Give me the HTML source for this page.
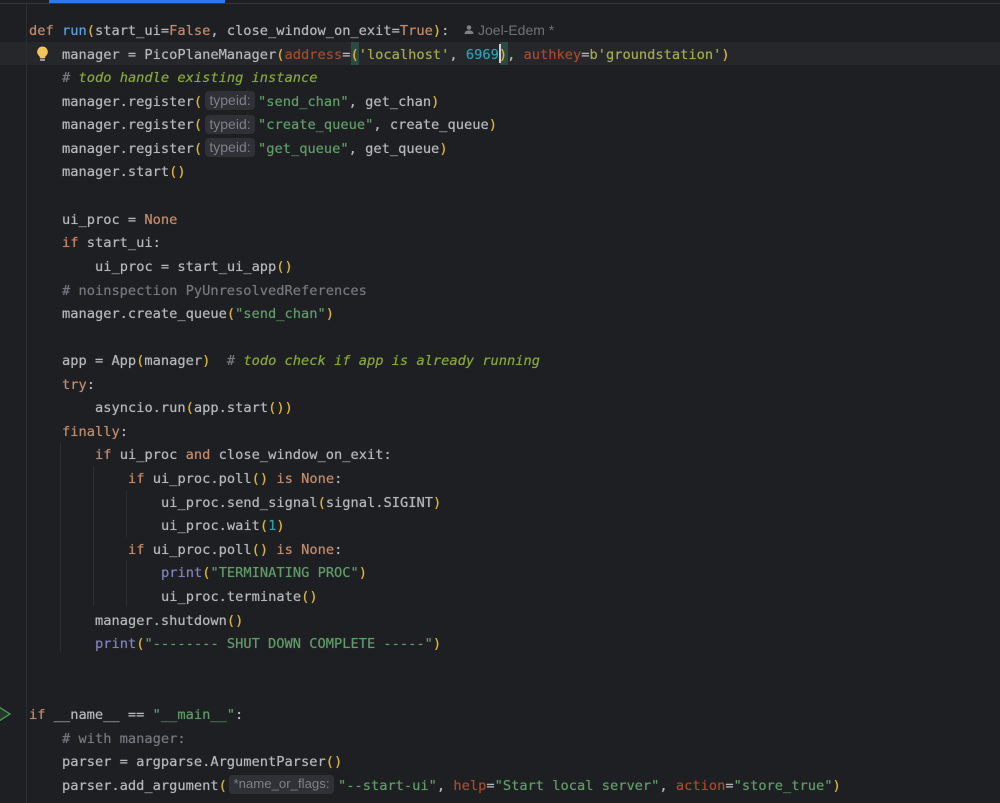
<!DOCTYPE html>
<html><head><meta charset="utf-8">
<style>
html,body{margin:0;padding:0;background:#1e1f22;}
#p{position:relative;width:1000px;height:803px;overflow:hidden;background:#1e1f22;}
.l{position:absolute;white-space:pre;font:13.7px/24px "DejaVu Sans Mono","Liberation Mono",monospace;color:#b4b6bc;height:24px;margin-top:1px;filter:blur(.35px);text-shadow:0 0 .6px currentColor;}
.k{color:#c08a6c}.f{color:#5a9fdf}.y{color:#dcb43c}.s{color:#5f9a68}.n{color:#2b9fae}.c{color:#74777e}.t{color:#86a53c;font-style:italic}.h{color:#a34a2c}.p{color:#8080bb}.g{color:#a3a84f}
.i{position:absolute;background:#2f3136;border-radius:4px;height:19px;margin-top:0;color:#7d8087;font:14px/18px "Liberation Sans",sans-serif;text-align:center;white-space:pre;filter:blur(.35px);}
.v{position:absolute;width:1px;background:#2b2d31;}
</style></head><body><div id="p">
<div style="position:absolute;left:0;top:3px;width:1000px;height:1px;background:#35373b"></div>
<div style="position:absolute;left:49px;top:0;width:176px;height:3px;background:#3574f0"></div>
<div style="position:absolute;left:0;top:42px;width:1000px;height:23px;background:#25272b"></div>
<div style="position:absolute;left:351px;top:42px;width:8px;height:23px;background:#2d4a42"></div>
<div style="position:absolute;left:500px;top:42px;width:8px;height:23px;background:#2d4a42"></div>
<div class="v" style="left:26px;top:4px;height:799px"></div>
<div class="v" style="left:60px;top:443px;height:209px"></div>
<div class="v" style="left:93px;top:466px;height:140px"></div>
<div class="v" style="left:126px;top:490px;height:47px"></div>
<div class="v" style="left:126px;top:560px;height:47px"></div>

<div class="l" style="left:29px;top:18px"><span class="k">def</span> <span class="f">run</span><span class="y">(</span>start_ui=<span class="k">False</span>, close_window_on_exit=<span class="k">True</span><span class="y">)</span>:</div>
<svg style="position:absolute;left:463px;top:24px" width="12" height="12" viewBox="0 0 12 12"><circle cx="6" cy="3.5" r="2.3" fill="#7d8087"/><path d="M1.5 10c0-2.6 2-3.6 4.500-3.600s4.500 1 4.500 3.600z" fill="#7d8087"/></svg>
<div style="position:absolute;left:478px;top:22px;font:14px/16px 'Liberation Sans',sans-serif;color:#6f7279;white-space:pre;filter:blur(.35px)">Joel-Edem *</div>

<svg style="position:absolute;left:36px;top:46px" width="13" height="16" viewBox="0 0 13 16"><path d="M6.500 .5a5.300 5.300 0 0 0-3 9.700l.4 1.800h5.200l.4-1.800a5.300 5.300 0 0 0-3-9.700z" fill="#f2c55c"/><rect x="4" y="12.500" width="5" height="2.500" rx=".8" fill="#9a9ba0"/></svg>
<div class="l" style="left:62px;top:42px">manager = PicoPlaneManager<span class="y">(</span><span class="h">address</span>=<span class="y">(</span><span class="g">'localhost'</span>, <span class="n">6969</span><span class="y">)</span>, <span class="h">authkey</span>=<span class="g">b'groundstation'</span><span class="y">)</span></div>
<div style="position:absolute;left:499px;top:44px;width:2px;height:19px;background:#cfd1d6"></div>
<div class="l" style="left:62px;top:65px"><span class="c">#</span> <span class="t">todo handle existing instance</span></div>

<div class="l" style="left:62px;top:89px">manager.register<span class="y">(</span></div>
<div class="i" style="left:205px;top:91px;width:50px">typeid:</div>
<div class="l" style="left:258px;top:89px"><span class="s">"send_chan"</span>, get_chan<span class="y">)</span></div>
<div class="l" style="left:62px;top:112px">manager.register<span class="y">(</span></div>
<div class="i" style="left:205px;top:115px;width:50px">typeid:</div>
<div class="l" style="left:258px;top:112px"><span class="s">"create_queue"</span>, create_queue<span class="y">)</span></div>
<div class="l" style="left:62px;top:136px">manager.register<span class="y">(</span></div>
<div class="i" style="left:205px;top:138px;width:50px">typeid:</div>
<div class="l" style="left:258px;top:136px"><span class="s">"get_queue"</span>, get_queue<span class="y">)</span></div>
<div class="l" style="left:62px;top:159px">manager.start<span class="y">()</span></div>

<div class="l" style="left:62px;top:207px">ui_proc = <span class="k">None</span></div>
<div class="l" style="left:62px;top:230px"><span class="k">if</span> start_ui:</div>
<div class="l" style="left:95px;top:254px">ui_proc = start_ui_app<span class="y">()</span></div>
<div class="l" style="left:62px;top:278px"><span class="c"># noinspection PyUnresolvedReferences</span></div>
<div class="l" style="left:62px;top:301px">manager.create_queue<span class="y">(</span><span class="s">"send_chan"</span><span class="y">)</span></div>

<div class="l" style="left:62px;top:348px">app = App<span class="y">(</span>manager<span class="y">)</span>  <span class="c">#</span> <span class="t">todo check if app is already running</span></div>
<div class="l" style="left:62px;top:372px"><span class="k">try</span>:</div>
<div class="l" style="left:95px;top:395px">asyncio.run<span class="y">(</span>app.start<span class="y">())</span></div>
<div class="l" style="left:62px;top:419px"><span class="k">finally</span>:</div>
<div class="l" style="left:95px;top:442px"><span class="k">if</span> ui_proc <span class="k">and</span> close_window_on_exit:</div>
<div class="l" style="left:128px;top:466px"><span class="k">if</span> ui_proc.poll<span class="y">()</span> <span class="k">is</span> <span class="k">None</span>:</div>
<div class="l" style="left:161px;top:490px">ui_proc.send_signal<span class="y">(</span>signal.SIGINT<span class="y">)</span></div>
<div class="l" style="left:161px;top:513px">ui_proc.wait<span class="y">(</span><span class="n">1</span><span class="y">)</span></div>
<div class="l" style="left:128px;top:537px"><span class="k">if</span> ui_proc.poll<span class="y">()</span> <span class="k">is</span> <span class="k">None</span>:</div>
<div class="l" style="left:161px;top:560px"><span class="p">print</span><span class="y">(</span><span class="s">"TERMINATING PROC"</span><span class="y">)</span></div>
<div class="l" style="left:161px;top:584px">ui_proc.terminate<span class="y">()</span></div>
<div class="l" style="left:95px;top:608px">manager.shutdown<span class="y">()</span></div>
<div class="l" style="left:95px;top:631px"><span class="p">print</span><span class="y">(</span><span class="s">"-------- SHUT DOWN COMPLETE -----"</span><span class="y">)</span></div>

<svg style="position:absolute;left:-2px;top:705px" width="14" height="18" viewBox="0 0 14 18"><path d="M1 2l11 7-11 7z" fill="#24382a" stroke="#4f9a5c" stroke-width="1.300"/></svg>
<div class="l" style="left:29px;top:702px"><span class="k">if</span> __name__ == <span class="s">"__main__"</span>:</div>
<div class="l" style="left:62px;top:726px"><span class="c"># with manager:</span></div>
<div class="l" style="left:62px;top:749px">parser = argparse.ArgumentParser<span class="y">()</span></div>
<div class="l" style="left:62px;top:773px">parser.add_argument<span class="y">(</span></div>
<div class="i" style="left:229px;top:775px;width:105px;font-size:13.2px">*name_or_flags:</div>
<div class="l" style="left:338px;top:773px"><span class="s">"--start-ui"</span>, <span class="h">help</span>=<span class="s">"Start local server"</span>, <span class="h">action</span>=<span class="s">"store_true"</span><span class="y">)</span></div>
</div></body></html>
